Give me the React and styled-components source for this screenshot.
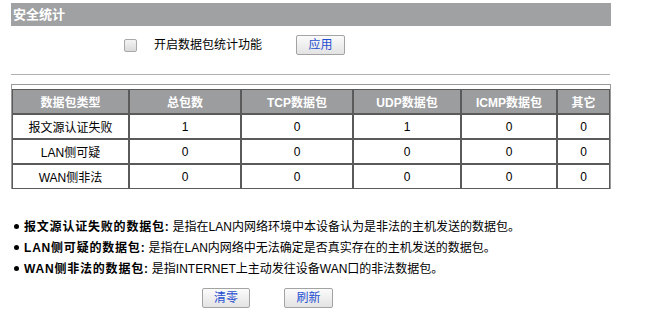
import React from "react";
import styled, { createGlobalStyle } from "styled-components";

const Global = createGlobalStyle`
  html, body { margin: 0; padding: 0; background: #fff; }
  body { font-family: "Liberation Sans", "Noto Sans CJK SC", sans-serif; font-size: 12px; color: #000; }
`;

const Page = styled.div`
  width: 600px;
  padding-left: 11px;
  padding-top: 3px;
`;

const TitleBar = styled.div`
  height: 23px;
  line-height: 23px;
  background: #a0a1a3;
  color: #fff;
  font-weight: bold;
  font-size: 13px;
  padding-left: 2px;
`;

const OptionRow = styled.div`
  display: flex;
  align-items: center;
  padding-top: 9px;
  padding-left: 113px;
  height: 20px;
`;

const Check = styled.span`
  width: 11px;
  height: 11px;
  border: 1px solid #a8a8a8;
  border-radius: 2px;
  background: linear-gradient(#f4f4f4, #dadada);
  margin-right: 17px;
`;

const Label = styled.span`
  line-height: 20px;
  margin-right: 34px;
`;

const Button = styled.button`
  width: ${(p) => p.$w || 49}px;
  height: 20px;
  padding: 0;
  border: 1px solid #a3a3a3;
  border-radius: 2px;
  background: linear-gradient(#fbfbfb, #e3e3e3);
  color: #1f4fd0;
  font-family: "Liberation Sans", "Noto Sans CJK SC", sans-serif;
  font-size: 12px;
  line-height: 18px;
`;

const Divider = styled.div`
  margin-top: 19px;
  height: 1px;
  background: #b0b0b0;
  width: 599px;
`;

const TableBox = styled.div`
  margin-top: 9px;
  width: 598px;
  border: 1px solid #9a9a9a;
  border-bottom: none;
  padding-top: 4px;
`;

const Table = styled.table`
  width: 598px;
  border-collapse: separate;
  border-spacing: 0;
  table-layout: fixed;
`;

const HeadCell = styled.th`
  height: 23px;
  padding: 0;
  border: 1px solid #5a5a5a;
  background: #9c9d9f;
  color: #fff;
  font-weight: bold;
  font-size: 12px;
  text-align: center;
`;

const Cell = styled.td`
  height: 23px;
  padding: 0;
  border: 1px solid #5a5a5a;
  background: #fff;
  text-align: center;
  font-size: 12px;
`;

const Notes = styled.div`
  margin-top: 28px;
  padding-left: 3px;
`;

const Note = styled.div`
  display: flex;
  align-items: center;
  line-height: 21px;
  height: 21px;
  white-space: nowrap;
`;

const Dot = styled.span`
  width: 5px;
  height: 5px;
  border-radius: 50%;
  background: #000;
  margin-right: 5px;
  margin-top: -2px;
`;

const Strong = styled.b`
  margin-right: 3px;
  letter-spacing: 0.8px;
`;

const Actions = styled.div`
  display: flex;
  gap: 34px;
  margin-top: 8px;
  padding-left: 191px;
`;

const cols = [117, 112, 112, 108, 96, 53];
const heads = ["数据包类型", "总包数", "TCP数据包", "UDP数据包", "ICMP数据包", "其它"];
const rows = [
  ["报文源认证失败", "1", "0", "1", "0", "0"],
  ["LAN侧可疑", "0", "0", "0", "0", "0"],
  ["WAN侧非法", "0", "0", "0", "0", "0"],
];
const notes = [
  ["报文源认证失败的数据包:", "是指在LAN内网络环境中本设备认为是非法的主机发送的数据包。"],
  ["LAN侧可疑的数据包:", "是指在LAN内网络中无法确定是否真实存在的主机发送的数据包。"],
  ["WAN侧非法的数据包:", "是指INTERNET上主动发往设备WAN口的非法数据包。"],
];

export default function App() {
  return (
    <Page>
      <Global />
      <TitleBar>安全统计</TitleBar>
      <OptionRow>
        <Check />
        <Label>开启数据包统计功能</Label>
        <Button $w={49}>应用</Button>
      </OptionRow>
      <Divider />
      <TableBox>
        <Table>
          <colgroup>
            {cols.map((w, i) => (
              <col key={i} style={{ width: w }} />
            ))}
          </colgroup>
          <thead>
            <tr>
              {heads.map((h) => (
                <HeadCell key={h}>{h}</HeadCell>
              ))}
            </tr>
          </thead>
          <tbody>
            {rows.map((r) => (
              <tr key={r[0]}>
                {r.map((c, i) => (
                  <Cell key={i}>{c}</Cell>
                ))}
              </tr>
            ))}
          </tbody>
        </Table>
      </TableBox>
      <Notes>
        {notes.map(([b, t]) => (
          <Note key={b}>
            <Dot />
            <Strong>{b}</Strong>
            <span>{t}</span>
          </Note>
        ))}
      </Notes>
      <Actions>
        <Button $w={48}>清零</Button>
        <Button $w={49}>刷新</Button>
      </Actions>
    </Page>
  );
}
